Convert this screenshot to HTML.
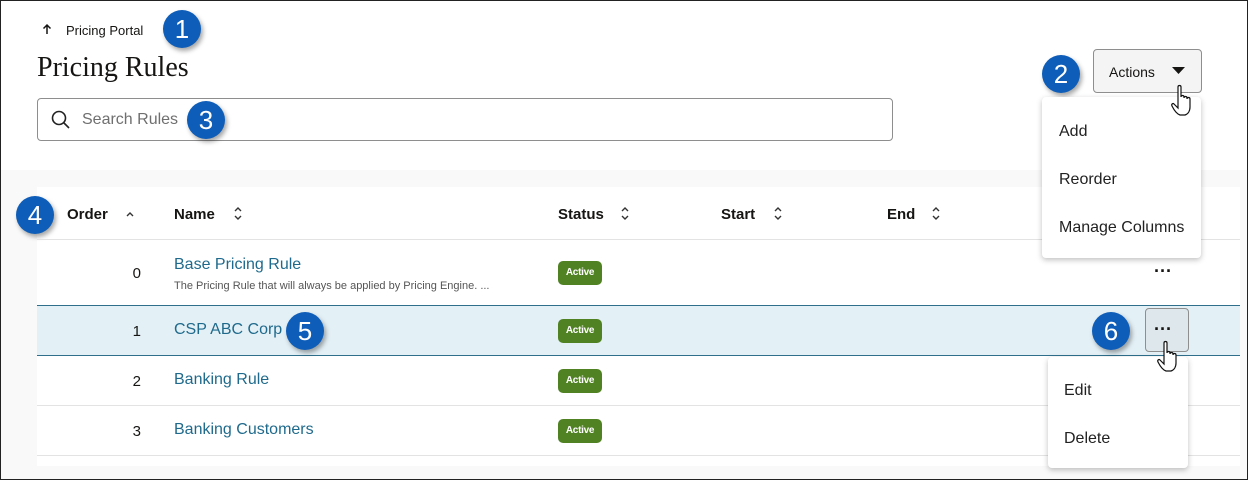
<!DOCTYPE html>
<html><head><meta charset="utf-8"><style>
*{box-sizing:border-box;margin:0;padding:0}
body{width:1248px;height:480px;position:relative;overflow:hidden;background:#fff;font-family:"Liberation Sans",sans-serif;color:#161513}
.frame{position:absolute;left:0;top:0;width:1248px;height:480px;border:1px solid #222;z-index:50;pointer-events:none}
.abs{position:absolute}
.gray{left:1px;top:170px;width:1246px;height:309px;background:#f9f9f9}
.table{left:37px;top:187px;width:1203px;height:279px;background:#fff}
.hdr{font-weight:bold;font-size:15px;top:206px}
.line{left:37px;width:1203px;height:1px;background:#e3e3e3}
.num{font-size:15px;width:20px;text-align:right}
.link{color:#1f6a8c;font-size:16px}
.badge{background:#508223;color:#fff;font-weight:bold;font-size:10px;width:44px;height:24px;line-height:24px;text-align:center;border-radius:5px;left:558px;letter-spacing:-0.3px}
.callout{width:38px;height:38px;border-radius:50%;background:#0e5db8;color:#fff;font-size:26px;line-height:38px;text-align:center;box-shadow:2px 3px 5px rgba(0,0,0,.35)}
.menu{background:#fff;border-radius:4px;box-shadow:0 2px 6px rgba(0,0,0,.25)}
.mi{position:absolute;font-size:16px;color:#222}
.dots{font-size:18px;font-weight:bold;letter-spacing:0px}
</style></head><body>
<div class="frame"></div>
<svg class="abs" style="left:42px;top:23px" width="10" height="12"><path d="M5 11V2M1.5 5.5L5 2l3.5 3.5" fill="none" stroke="#161513" stroke-width="1.5"/></svg>
<div class="abs" style="left:66px;top:23px;font-size:13px">Pricing Portal</div>
<div class="abs callout" style="left:163px;top:10px">1</div>
<div class="abs" style="left:37px;top:52px;font-family:'Liberation Serif',serif;font-size:28px">Pricing Rules</div>
<div class="abs" style="left:37px;top:98px;width:856px;height:43px;border:1px solid #8e8e8e;border-radius:4px"></div>
<svg class="abs" style="left:50px;top:109px" width="22" height="22" viewBox="0 0 22 22"><circle cx="9" cy="9" r="6.5" fill="none" stroke="#222" stroke-width="1.6"/><path d="M14 14l5 5" stroke="#222" stroke-width="1.6"/></svg>
<div class="abs" style="left:82px;top:111px;font-size:16px;color:#6f6f6f">Search Rules</div>
<div class="abs callout" style="left:187px;top:101px">3</div>

<div class="abs" style="left:1093px;top:49px;width:109px;height:44px;border:1px solid #8e8e8e;border-radius:4px;background:#f4f4f4"></div>
<div class="abs" style="left:1109px;top:64px;font-size:14px">Actions</div>
<svg class="abs" style="left:1172px;top:67px" width="14" height="8"><path d="M0 0h13L6.5 7z" fill="#161513"/></svg>
<div class="abs callout" style="left:1042px;top:55px">2</div>

<div class="abs gray"></div>
<div class="abs table"></div>
<div class="abs hdr" style="left:67px">Order</div>
<div class="abs hdr" style="left:174px">Name</div>
<div class="abs hdr" style="left:558px">Status</div>
<div class="abs hdr" style="left:721px">Start</div>
<div class="abs hdr" style="left:887px">End</div>
<svg class="abs" style="left:120px;top:206px" width="830" height="16"><g fill="none" stroke="#333" stroke-width="1.4"><path d="M7 10l3-3 3 3"/><path d="M115 5l3-3 3 3M115 10l3 3 3-3"/><path d="M502 5l3-3 3 3M502 10l3 3 3-3"/><path d="M655 5l3-3 3 3M655 10l3 3 3-3"/><path d="M813 5l3-3 3 3M813 10l3 3 3-3"/></g></svg>
<div class="abs callout" style="left:16px;top:196px">4</div>
<div class="abs line" style="top:239px"></div>

<div class="abs num" style="left:121px;top:265px">0</div>
<div class="abs link" style="left:174px;top:256px">Base Pricing Rule</div>
<div class="abs" style="left:174px;top:280px;font-size:11px;color:#555">The Pricing Rule that will always be applied by Pricing Engine. ...</div>
<div class="abs badge" style="top:261px">Active</div>
<div class="abs dots" style="left:1154px;top:261px">···</div>

<div class="abs" style="left:37px;top:305px;width:1203px;height:51px;background:#e3f0f6;border-top:1px solid #2f6f8c;border-bottom:1px solid #2f6f8c"></div>
<div class="abs num" style="left:121px;top:323px">1</div>
<div class="abs link" style="left:174px;top:321px">CSP ABC Corp</div>
<div class="abs badge" style="top:319px">Active</div>
<div class="abs callout" style="left:286px;top:312px">5</div>
<div class="abs" style="left:1145px;top:308px;width:44px;height:44px;border:1px solid #8e8e8e;border-radius:4px;background:#dde7ec"></div>
<div class="abs dots" style="left:1154px;top:319px">···</div>
<div class="abs callout" style="left:1092px;top:312px">6</div>

<div class="abs num" style="left:121px;top:373px">2</div>
<div class="abs link" style="left:174px;top:371px">Banking Rule</div>
<div class="abs badge" style="top:369px">Active</div>
<div class="abs line" style="top:405px"></div>
<div class="abs num" style="left:121px;top:423px">3</div>
<div class="abs link" style="left:174px;top:421px">Banking Customers</div>
<div class="abs badge" style="top:419px">Active</div>
<div class="abs line" style="top:455px"></div>

<div class="abs menu" style="left:1042px;top:97px;width:159px;height:161px">
<div class="mi" style="left:17px;top:26px">Add</div>
<div class="mi" style="left:17px;top:74px">Reorder</div>
<div class="mi" style="left:17px;top:122px">Manage Columns</div>
</div>
<div class="abs menu" style="left:1048px;top:357px;width:140px;height:111px">
<div class="mi" style="left:16px;top:25px">Edit</div>
<div class="mi" style="left:16px;top:73px">Delete</div>
</div>
<svg class="abs" style="left:1170px;top:84px" width="26" height="34" viewBox="0 0 26 34"><path d="M8 3c0-2 3-2 3 0v10c0-2 3-2 3 0v1c0-2 3-2 3 0v1c0-2 3-2 3 0v8c0 4-2 7-5 8h-5c-3-1-6-5-8-9-1-2 1-3 2-2l4 4z" fill="#fff" stroke="#111" stroke-width="1.2"/></svg>
<svg class="abs" style="left:1156px;top:340px" width="26" height="34" viewBox="0 0 26 34"><path d="M8 3c0-2 3-2 3 0v10c0-2 3-2 3 0v1c0-2 3-2 3 0v1c0-2 3-2 3 0v8c0 4-2 7-5 8h-5c-3-1-6-5-8-9-1-2 1-3 2-2l4 4z" fill="#fff" stroke="#111" stroke-width="1.2"/></svg>
</body></html>
